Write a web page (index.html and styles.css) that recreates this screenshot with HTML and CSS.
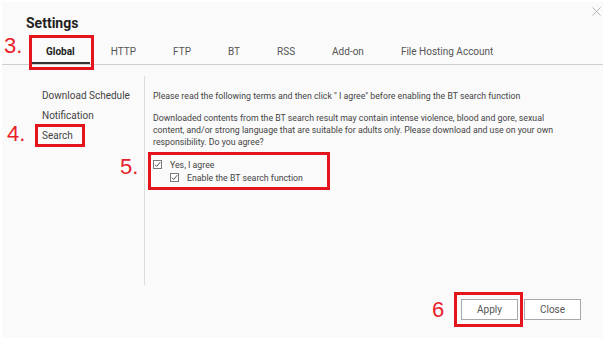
FILE: index.html
```html
<!DOCTYPE html>
<html lang="en">
  <head>
    <meta charset="UTF-8" />
    <title>Settings</title>
    <link rel="stylesheet" href="styles.css">
  </head>
  <body>
    <div class="dialog">
      <div class="header">
        <h1 class="title">Settings</h1>
        <svg class="close-x" width="9" height="9" viewBox="0 0 9 9">
          <path d="M0.5 0.5 L8.5 8.5 M8.5 0.5 L0.5 8.5" stroke="#b3b3b3" stroke-width="1" />
        </svg>
      </div>

      <div class="tabs">
        <div class="tab active hl hl-tab"><span class="step step-3">3.</span>Global</div>
        <div class="tab">HTTP</div>
        <div class="tab">FTP</div>
        <div class="tab">BT</div>
        <div class="tab">RSS</div>
        <div class="tab">Add-on</div>
        <div class="tab">File Hosting Account</div>
      </div>

      <div class="main">
        <ul class="nav">
          <li>Download Schedule</li>
          <li>Notification</li>
          <li class="hl hl-search"><span class="step step-4">4.</span>Search</li>
        </ul>

        <div class="content">
          <p class="intro">Please read the following terms and then click " I agree" before enabling the BT search function</p>
          <p class="terms">
            Downloaded contents from the BT search result may contain intense violence, blood and gore, sexual<br>
            content, and/or strong language that are suitable for adults only. Please download and use on your own<br>
            responsibility. Do you agree?
          </p>

          <div class="agree hl hl-agree">
            <span class="step step-5">5.</span>
            <label class="check">
              <svg width="9" height="9" viewBox="0 0 9 9">
                <rect x="0.5" y="0.5" width="8" height="8" fill="#fff" stroke="#7a7a7a" />
                <path d="M2 4.6 L3.7 6.4 L7.2 2.2" fill="none" stroke="#555" stroke-width="1" />
              </svg>
              Yes, I agree
            </label>
            <label class="check sub">
              <svg width="9" height="9" viewBox="0 0 9 9">
                <rect x="0.5" y="0.5" width="8" height="8" fill="#fff" stroke="#7a7a7a" />
                <path d="M2 4.6 L3.7 6.4 L7.2 2.2" fill="none" stroke="#555" stroke-width="1" />
              </svg>
              Enable the BT search function
            </label>
          </div>
        </div>
      </div>

      <div class="footer">
        <span class="hl hl-apply">
          <span class="step step-6">6</span>
          <button class="btn">Apply</button>
        </span>
        <button class="btn">Close</button>
      </div>
    </div>
  </body>
</html>
```

FILE: styles.css
```css
body {
  margin: 0;
  background-color: #ffffff;
  font-family: Roboto, "Liberation Sans", sans-serif;
  color: #444;
}

.dialog {
  margin: 2px;
  width: 601px;
  height: 336px;
  background-color: #fafafa;
  display: flex;
  flex-direction: column;
}

.header {
  display: flex;
  justify-content: space-between;
  align-items: flex-start;
  padding: 0 2px 0 24px;
}

.title {
  margin: 13px 0 0;
  font-size: 14px;
  line-height: 16px;
  font-weight: 700;
  color: #1f1f1f;
}

.close-x {
  margin-top: 5px;
}

.tabs {
  display: flex;
  gap: 5px;
  margin-top: 11px;
  padding-left: 29px;
  border-bottom: 1px solid #cfcfcf;
}

.tab {
  padding: 0 16px;
  height: 20px;
  line-height: 20px;
  font-size: 10px;
  color: #555;
  border-bottom: 2px solid transparent;
}

.tab.active {
  font-weight: 700;
  color: #222;
  border-bottom-color: #333;
  padding: 0 15px;
}

.main {
  display: flex;
  margin-top: 11px;
  height: 209px;
}

.nav {
  list-style: none;
  margin: 0;
  padding: 10px 0 0 40px;
  width: 102px;
  border-right: 1px solid #dcdcdc;
}

.nav li {
  width: fit-content;
  font-size: 10px;
  line-height: 20px;
  color: #444;
}

.content {
  padding: 14px 0 0 8px;
  font-size: 8.75px;
  color: #444;
}

.content p {
  margin: 0;
  line-height: 12px;
}

.terms {
  margin-top: 10px !important;
}

.agree {
  margin-top: 10px;
  width: 172px;
  display: flex;
  flex-direction: column;
}

.check {
  display: flex;
  align-items: center;
  gap: 8px;
  height: 13px;
}

.check.sub {
  padding-left: 17px;
}

.footer {
  display: flex;
  justify-content: flex-end;
  gap: 6px;
  margin-top: 14px;
  padding-right: 22px;
}

.btn {
  width: 57px;
  height: 21px;
  padding: 0;
  background-color: #ffffff;
  border: 1px solid #a8a8a8;
  font-family: Roboto, "Liberation Sans", sans-serif;
  font-size: 10px;
  color: #555;
  display: block;
}

/* red annotation marks */
.hl {
  position: relative;
}

.hl::after {
  content: "";
  position: absolute;
  border: 3px solid #e3141c;
  pointer-events: none;
}

.hl-tab::after {
  top: -7px;
  left: -2px;
  right: -4px;
  bottom: -8px;
}

.hl-search::after {
  top: -2px;
  left: -7px;
  right: -12px;
  bottom: -1px;
}

.hl-agree::after {
  top: -6px;
  left: -5px;
  right: -5px;
  bottom: -6px;
}

.hl-apply::after {
  top: -7px;
  left: -7px;
  right: -5px;
  bottom: -7px;
}

.step {
  position: absolute;
  font-family: "Liberation Sans", sans-serif;
  font-size: 22px;
  line-height: 22px;
  font-weight: 400;
  color: #e8202a;
}

.step-3 {
  left: -27px;
  top: -7px;
}

.step-4 {
  left: -35px;
  top: -3px;
}

.step-5 {
  left: -33px;
  top: -2px;
}

.step-6 {
  left: -29px;
  top: 0;
}
```
